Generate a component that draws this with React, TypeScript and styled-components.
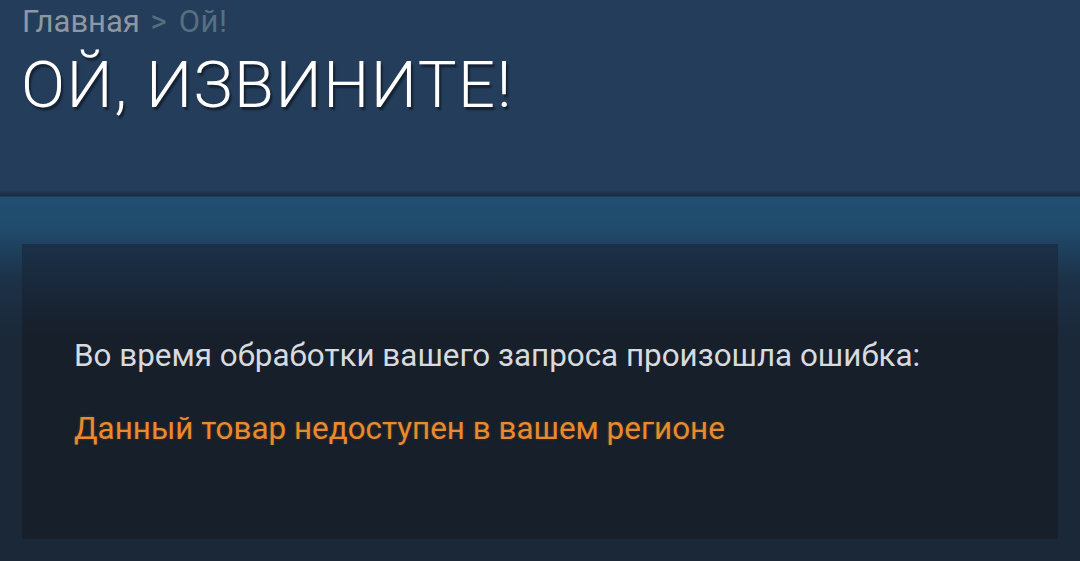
import React from "react";
import styled, { createGlobalStyle } from "styled-components";

const GlobalStyle = createGlobalStyle`
  html, body {
    margin: 0;
    padding: 0;
    background: #1b2838;
    font-family: Roboto, "Noto Sans", Arial, sans-serif;
    overflow: hidden;
  }
`;

const Page = styled.div`
  width: 1080px;
  height: 561px;
  display: flex;
  flex-direction: column;
  background: linear-gradient(
    to bottom,
    #243d5a 0px,
    #243d5a 190px,
    #1b2a3f 196px,
    #214f72 197px,
    #204a6b 230px,
    #1c3147 280px,
    #1b2838 340px
  );
`;

const Header = styled.header`
  height: 196px;
  box-sizing: border-box;
  padding: 2px 22px 0;
`;

const Breadcrumbs = styled.div`
  font-size: 31px;
  line-height: 40px;
  color: #8f98a0;
  word-spacing: 3px;

  span {
    color: #56707f;
    letter-spacing: 0.6px;
  }
`;

const Title = styled.h1`
  margin: 8px 0 0 -1px;
  font-size: 65px;
  font-weight: 300;
  line-height: 70px;
  color: #ffffff;
  letter-spacing: 1.6px;
  text-shadow: 2px 3px 2px rgba(0, 0, 0, 0.45);
`;

const Content = styled.main`
  padding: 48px 22px 0;
`;

const Panel = styled.section`
  height: 295px;
  box-sizing: border-box;
  padding: 92px 52px 0;
  background: linear-gradient(to bottom, #1b3048 0px, #171f2a 90px, #171f2a 100%);
`;

const Message = styled.p<{ accent?: boolean }>`
  margin: 0 0 ${(p) => (p.accent ? "0" : "33px")};
  font-size: 31.4px;
  line-height: 40px;
  color: ${(p) => (p.accent ? "#e98a2c" : "#d7dadf")};
  text-shadow: ${(p) => (p.accent ? "0 0 3px rgba(230, 120, 30, 0.25)" : "none")};
`;

export default function App(): React.ReactElement {
  return (
    <Page>
      <GlobalStyle />
      <Header>
        <Breadcrumbs>
          Главная <span>&gt; Ой!</span>
        </Breadcrumbs>
        <Title>ОЙ, ИЗВИНИТЕ!</Title>
      </Header>
      <Content>
        <Panel>
          <Message>Во время обработки вашего запроса произошла ошибка:</Message>
          <Message accent>Данный товар недоступен в вашем регионе</Message>
        </Panel>
      </Content>
    </Page>
  );
}
